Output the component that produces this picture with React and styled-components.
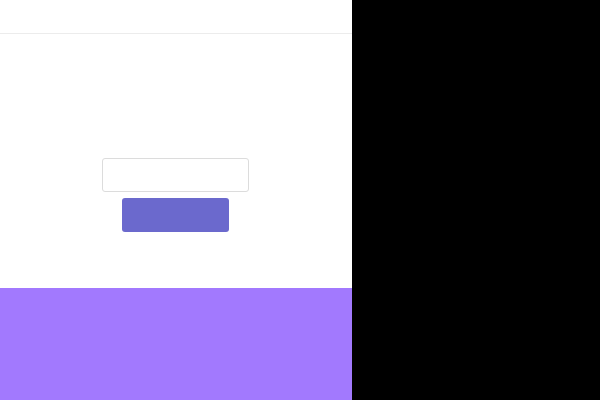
import styled, { createGlobalStyle } from 'styled-components';

const GlobalStyle = createGlobalStyle`
    html, body {
        margin: 0;
        padding: 0;
        background: #000;
        font-family: "Open Sans", "Liberation Sans", sans-serif;
    }
`;

const App = () => {
    return (
        <>
            <GlobalStyle />
            <StyledPage>
                <StyledHeader />
                <StyledMain>
                    <StyledInput type='text' aria-label='input' />
                    <StyledSubmitButton type='button' aria-label='submit' />
                </StyledMain>
                <StyledFooter />
            </StyledPage>
        </>
    );
}

const StyledPage = styled.div`
    width: 352px;
    height: 400px;
    display: flex;
    flex-direction: column;
    background: #fff;
`;

const StyledHeader = styled.header`
    height: 33px;
    flex-shrink: 0;
    background: #fff;
    border-bottom: 1px solid #ececec;
`;

const StyledMain = styled.main`
    flex: 1;
    display: flex;
    flex-direction: column;
    justify-content: center;
    align-items: center;
    padding-top: 68px;
    gap: 6px;
    background: #fff;
`;

const StyledInput = styled.input`
    box-sizing: border-box;
    width: 147px;
    height: 34px;
    margin: 0 0 0 -2px;
    padding: 0 8px;
    border: 1px solid #dcdcdc;
    border-radius: 3px;
    background: #fff;
    outline: none;
`;

const StyledSubmitButton = styled.button`
    box-sizing: border-box;
    width: 107px;
    height: 34px;
    margin: 0 0 0 -1px;
    border: none;
    border-radius: 3px;
    background-color: #6b69cd;
`;

const StyledFooter = styled.footer`
    height: 112px;
    flex-shrink: 0;
    background: #a279fe;
`;

export default App
